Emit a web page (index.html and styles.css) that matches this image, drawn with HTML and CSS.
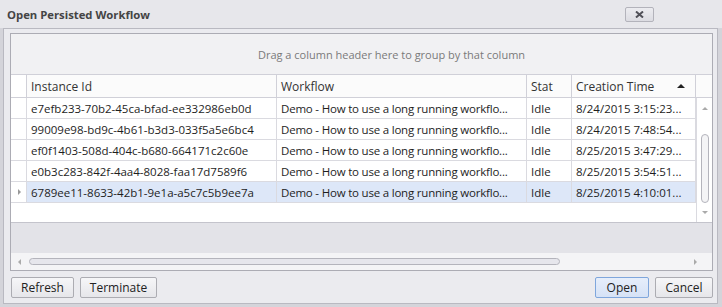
FILE: index.html
```html
<!DOCTYPE html>
<html lang="en">
<head>
  <meta charset="UTF-8" />
  <title>Open Persisted Workflow</title>
  <link rel="stylesheet" href="styles.css">
</head>
<body>
  <div class="window">
    <!-- Title bar -->
    <div class="titlebar">
      <span class="title">Open Persisted Workflow</span>
      <button class="close">
        <svg width="9" height="7" viewBox="0 0 9 7"><path d="M1 0.5 L8 6.5 M8 0.5 L1 6.5" stroke="#505058" stroke-width="2"/></svg>
      </button>
    </div>

    <div class="panel">
      <!-- Grid -->
      <div class="grid">
        <div class="group-panel">Drag a column header here to group by that column</div>

        <div class="row header">
          <div class="cell sel"></div>
          <div class="cell">Instance Id</div>
          <div class="cell">Workflow</div>
          <div class="cell">Stat</div>
          <div class="cell sorted">Creation Time <span class="sort-up"></span></div>
          <div class="cell scroll-head"></div>
        </div>

        <div class="body">
          <div class="rows">
            <div class="row">
              <div class="cell sel"></div>
              <div class="cell">e7efb233-70b2-45ca-bfad-ee332986eb0d</div>
              <div class="cell wf">Demo - How to use a long running workflo...</div>
              <div class="cell">Idle</div>
              <div class="cell">8/24/2015 3:15:23...</div>
            </div>
            <div class="row">
              <div class="cell sel"></div>
              <div class="cell">99009e98-bd9c-4b61-b3d3-033f5a5e6bc4</div>
              <div class="cell wf">Demo - How to use a long running workflo...</div>
              <div class="cell">Idle</div>
              <div class="cell">8/24/2015 7:48:54...</div>
            </div>
            <div class="row">
              <div class="cell sel"></div>
              <div class="cell">ef0f1403-508d-404c-b680-664171c2c60e</div>
              <div class="cell wf">Demo - How to use a long running workflo...</div>
              <div class="cell">Idle</div>
              <div class="cell">8/25/2015 3:47:29...</div>
            </div>
            <div class="row">
              <div class="cell sel"></div>
              <div class="cell">e0b3c283-842f-4aa4-8028-faa17d7589f6</div>
              <div class="cell wf">Demo - How to use a long running workflo...</div>
              <div class="cell">Idle</div>
              <div class="cell">8/25/2015 3:54:51...</div>
            </div>
            <div class="row selected">
              <div class="cell sel"><span class="current"></span></div>
              <div class="cell">6789ee11-8633-42b1-9e1a-a5c7c5b9ee7a</div>
              <div class="cell wf">Demo - How to use a long running workflo...</div>
              <div class="cell">Idle</div>
              <div class="cell">8/25/2015 4:10:01...</div>
            </div>
          </div>
          <!-- vertical scrollbar -->
          <div class="vscroll">
            <span class="arrow up"></span>
            <div class="vthumb"></div>
            <span class="arrow down"></span>
          </div>
        </div>

        <div class="empty"></div>

        <!-- horizontal scrollbar -->
        <div class="hscroll">
          <span class="arrow left"></span>
          <div class="hthumb"></div>
          <span class="arrow right"></span>
        </div>
      </div>

      <!-- Buttons -->
      <div class="footer">
        <button class="btn">Refresh</button>
        <button class="btn btn-wide">Terminate</button>
        <span class="spacer"></span>
        <button class="btn btn-default">Open</button>
        <button class="btn btn-cancel">Cancel</button>
      </div>
    </div>
  </div>
</body>
</html>
```

FILE: styles.css
```css
body {
  margin: 0;
  padding: 0;
  font-family: 'Segoe UI', 'Open Sans', sans-serif;
  font-size: 11.5px;
  color: #1e1e1e;
  background-color: #d4d4da;
}
.window {
  width: 722px;
  height: 307px;
  display: flex;
  flex-direction: column;
  background: #d4d4da;
}
/* Title bar */
.titlebar {
  height: 28px;
  display: flex;
  align-items: center;
  background: #e7e7eb;
}
.title {
  padding-left: 7px;
  font-weight: bold;
  font-size: 11.3px;
  color: #444;
}
.close {
  margin-left: auto;
  margin-right: 68px;
  margin-top: 1px;
  width: 29px;
  height: 15px;
  padding: 0;
  border: 1px solid #b3b3bb;
  border-radius: 2px;
  background: linear-gradient(#ececf0, #dcdce2);
  display: flex;
  align-items: center;
  justify-content: center;
}
/* Panel */
.panel {
  margin: 0 4px 3px 3px;
  height: 276px;
  box-sizing: border-box;
  border: 1px solid #b9b9c1;
  background: #ebebef;
  padding: 4px 4px 0 6px;
  display: flex;
  flex-direction: column;
}
.grid {
  width: 703px;
  height: 238px;
  box-sizing: border-box;
  border: 1px solid #acacb4;
  background: #fff;
  display: flex;
  flex-direction: column;
}
.group-panel {
  height: 40px;
  border-bottom: 1px solid #d0d0d8;
  background: #f1f1f3;
  display: flex;
  align-items: center;
  justify-content: center;
  padding-left: 60px;
  color: #7a7a7a;
  font-size: 11px;
}
.row {
  display: grid;
  grid-template-columns: 16px 250px 250px 45px 124px;
  height: 21px;
  box-sizing: border-box;
  border-bottom: 1px solid #dadae0;
}
.row.header {
  grid-template-columns: 16px 250px 250px 45px 124px 16px;
  height: 23px;
  background: #fbfbfb;
  border-bottom: 1px solid #d0d0d8;
  color: #333;
  font-size: 12px;
}
.cell {
  border-right: 1px solid #dadae0;
  padding-left: 4px;
  display: flex;
  align-items: center;
  white-space: nowrap;
  overflow: hidden;
}
.cell.wf {
  letter-spacing: -0.2px;
}
.header .cell {
  border-right-color: #d0d0d8;
}
.cell.sel {
  padding-left: 0;
  justify-content: center;
  background: #fff;
}
.sorted {
  justify-content: space-between;
  padding-right: 10px;
}
.sort-up {
  width: 0;
  height: 0;
  border-left: 4px solid transparent;
  border-right: 4px solid transparent;
  border-bottom: 4px solid #222;
}
.cell.scroll-head {
  border-right: none;
}
.selected {
  background: #dde7f8;
}
.current {
  width: 0;
  height: 0;
  border-top: 3px solid transparent;
  border-bottom: 3px solid transparent;
  border-left: 3px solid #999;
  margin-left: 1px;
}
/* Body with vertical scrollbar */
.body {
  height: 124px;
  display: flex;
}
.rows {
  width: 685px;
  border-right: 1px solid #dadae0;
}
.vscroll {
  flex: 1;
  display: flex;
  flex-direction: column;
  align-items: center;
  padding-top: 9px;
}
.vthumb {
  width: 6px;
  height: 67px;
  margin: 24px 0 8px 1px;
  border: 1px solid #b4b4bc;
  border-radius: 4px;
  background: #f4f4f6;
}
.arrow {
  width: 0;
  height: 0;
}
.arrow.up {
  border-left: 3px solid transparent;
  border-right: 3px solid transparent;
  border-bottom: 3px solid #aaa;
}
.arrow.down {
  border-left: 3px solid transparent;
  border-right: 3px solid transparent;
  border-top: 3px solid #aaa;
}
.arrow.left {
  border-top: 3px solid transparent;
  border-bottom: 3px solid transparent;
  border-right: 3px solid #aaa;
}
.arrow.right {
  border-top: 3px solid transparent;
  border-bottom: 3px solid transparent;
  border-left: 3px solid #aaa;
}
.empty {
  height: 30px;
  border-top: 1px solid #c4c4cc;
  background: #e3e3e8;
}
.hscroll {
  height: 17px;
  background: #f4f4f6;
  display: flex;
  align-items: center;
  padding-left: 7px;
}
.hthumb {
  width: 529px;
  height: 5px;
  margin-left: 8px;
  margin-right: 134px;
  border: 1px solid #b4b4bc;
  border-radius: 4px;
  background: #e6e6ec;
}
/* Buttons */
.footer {
  display: flex;
  align-items: flex-start;
  gap: 6px;
  padding-top: 6px;
  padding-left: 1px;
  width: 703px;
  box-sizing: border-box;
}
.spacer {
  flex: 1;
}
.btn {
  height: 21px;
  width: 63px;
  padding: 0;
  border: 1px solid #acacb2;
  border-radius: 2px;
  background: linear-gradient(#f6f6f8, #e6e6ea);
  font-family: 'Segoe UI', 'Open Sans', sans-serif;
  font-size: 12px;
  color: #222;
}
.btn-wide {
  width: 77px;
}
.btn-default {
  width: 54px;
  border-color: #7fa6dc;
  background: linear-gradient(#e6eefb, #d6e2f6);
}
.btn-cancel {
  width: 58px;
}
```
